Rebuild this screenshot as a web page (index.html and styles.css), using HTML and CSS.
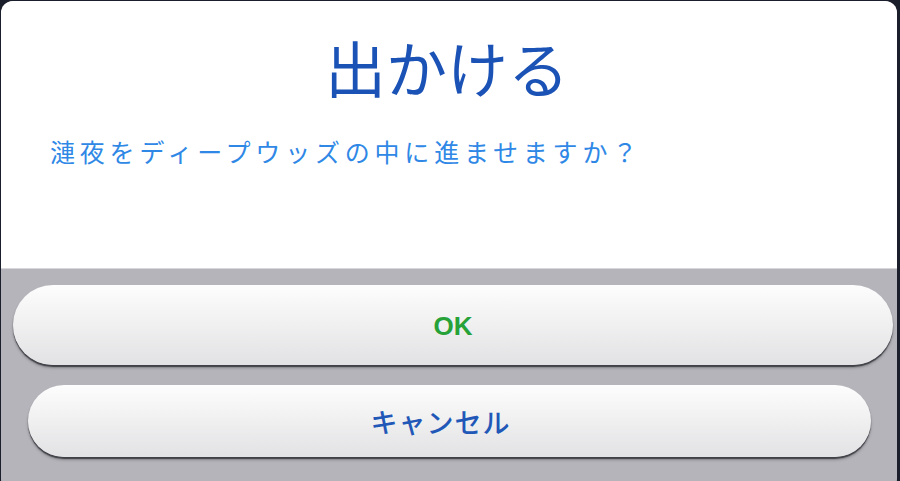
FILE: index.html
```html
<!DOCTYPE html>
<html lang="ja">
<head>
<meta charset="utf-8">
<link rel="stylesheet" href="styles.css">
</head>
<body>
<div class="dialog">
  <div class="top">
    <h1 class="title">出かける</h1>
    <p class="msg">漣夜をディープウッズの中に進ませますか？</p>
  </div>
  <div class="bottom">
    <div class="btn btn-ok">OK</div>
    <div class="btn btn-cancel">キャンセル</div>
  </div>
</div>
</body>
</html>
```
FILE: styles.css
```css
html, body {
  margin: 0;
  padding: 0;
  background: #1b1e2b;
  width: 900px;
  height: 481px;
  overflow: hidden;
}
body {
  font-family: "Noto Sans CJK JP", "Noto Sans", sans-serif;
}
.dialog {
  margin: 1px 3px 0 1px;
  height: 490px;
  border-radius: 12px;
  overflow: hidden;
  display: flex;
  flex-direction: column;
  background: #b4b4ba;
}
.top {
  background: #fff;
  height: 267px;
  border-bottom: 1px solid #d8d8dc;
  display: flex;
  flex-direction: column;
}
.title {
  margin: 26px 0 0 -4px;
  text-align: center;
  font-size: 61px;
  line-height: 80px;
  font-weight: 400;
  color: #1b52b6;
}
.msg {
  margin: 27px 0 0 49px;
  font-size: 25px;
  line-height: 34px;
  letter-spacing: 4.8px;
  color: #2f88e6;
}
.bottom {
  display: flex;
  flex-direction: column;
  padding-top: 16px;
}
.btn {
  display: flex;
  align-items: center;
  justify-content: center;
  background: linear-gradient(#fdfdfd, #f1f1f2 45%, #e2e2e4);
  box-shadow: 0 2px 1px rgba(40, 40, 50, 0.75), 0 3px 3px rgba(0, 0, 0, 0.25);
}
.btn-ok {
  margin: 0 4px 0 12px;
  height: 80px;
  border-radius: 40px;
  font-family: "Liberation Sans", Arial, sans-serif;
  font-weight: 700;
  font-size: 26px;
  color: #27a239;
  padding-top: 2px;
  box-sizing: border-box;
}
.btn-cancel {
  margin: 20px 26px 0 27px;
  height: 72px;
  border-radius: 36px;
  font-size: 27px;
  font-weight: 500;
  letter-spacing: 1px;
  color: #2158b8;
  padding-right: 18px;
}
```
